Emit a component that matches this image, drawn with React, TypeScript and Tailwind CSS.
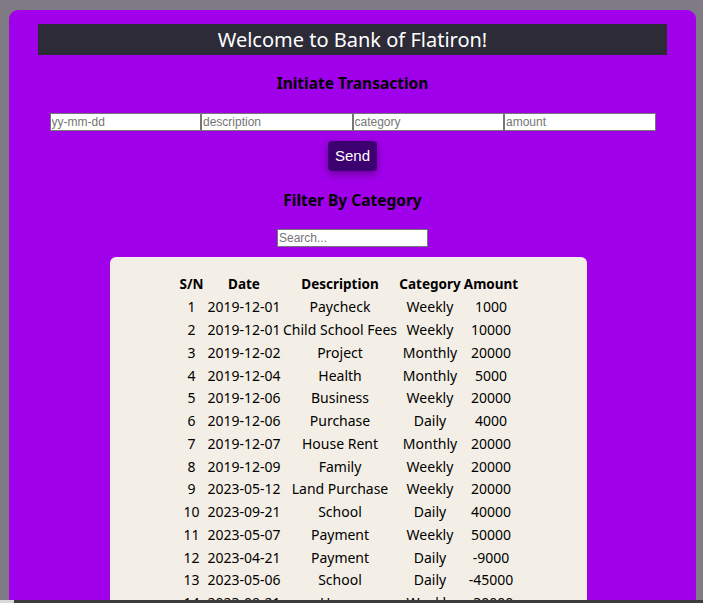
import React from "react";

const rows = [
  [1, "2019-12-01", "Paycheck", "Weekly", "1000"],
  [2, "2019-12-01", "Child School Fees", "Weekly", "10000"],
  [3, "2019-12-02", "Project", "Monthly", "20000"],
  [4, "2019-12-04", "Health", "Monthly", "5000"],
  [5, "2019-12-06", "Business", "Weekly", "20000"],
  [6, "2019-12-06", "Purchase", "Daily", "4000"],
  [7, "2019-12-07", "House Rent", "Monthly", "20000"],
  [8, "2019-12-09", "Family", "Weekly", "20000"],
  [9, "2023-05-12", "Land Purchase", "Weekly", "20000"],
  [10, "2023-09-21", "School", "Daily", "40000"],
  [11, "2023-05-07", "Payment", "Weekly", "50000"],
  [12, "2023-04-21", "Payment", "Daily", "-9000"],
  [13, "2023-05-06", "School", "Daily", "-45000"],
  [14, "2023-09-21", "Home", "Weekly", "-30000"],
  [15, "2023-09-21", "Home", "Weekly", "-30000"],
];

export default function App() {
  return (
    <div className="flex flex-col h-[603px] w-[703px] overflow-hidden bg-[#7f7a84] font-['Noto_Sans',sans-serif]">
      <div className="flex-1 overflow-hidden pt-[10px] pl-[9px] pr-[7px]">
        <div className="bg-[#a100ea] rounded-t-[9px] pt-[14px] min-h-full">
          {/* header */}
          <div className="mx-[29px] h-[31px] bg-[#2c2b37] flex items-center justify-center text-white text-[20px]">
            Welcome to Bank of Flatiron!
          </div>

          <h2 className="mt-[17px] text-center font-bold text-[15.5px] text-black">
            Initiate Transaction
          </h2>

          {/* form */}
          <form className="mt-[18px] flex justify-center">
            <input className="w-[151.5px] h-[18px] bg-white border border-[#767676] text-[12px] px-[1px] font-['Liberation_Sans',sans-serif] placeholder:text-[#757575]" placeholder="yy-mm-dd" />
            <input className="w-[151.5px] h-[18px] bg-white border border-[#767676] text-[12px] px-[1px] font-['Liberation_Sans',sans-serif] placeholder:text-[#757575]" placeholder="description" />
            <input className="w-[151.5px] h-[18px] bg-white border border-[#767676] text-[12px] px-[1px] font-['Liberation_Sans',sans-serif] placeholder:text-[#757575]" placeholder="category" />
            <input className="w-[151.5px] h-[18px] bg-white border border-[#767676] text-[12px] px-[1px] font-['Liberation_Sans',sans-serif] placeholder:text-[#757575]" placeholder="amount" />
          </form>
          <div className="mt-[10px] flex justify-center">
            <button className="w-[49px] h-[30px] rounded-[4px] bg-[#3d0070] text-white text-[15px] font-['Liberation_Sans',sans-serif] shadow-[0_3px_8px_rgba(0,0,0,0.35)]">
              Send
            </button>
          </div>

          <h2 className="mt-[18px] text-center font-bold text-[15.5px] text-black">
            Filter By Category
          </h2>
          <div className="mt-[16px] flex justify-center">
            <input className="w-[151px] h-[18px] bg-white border border-[#767676] text-[12px] px-[1px] font-['Liberation_Sans',sans-serif] placeholder:text-[#757575]" placeholder="Search..." />
          </div>

          {/* table card */}
          <div className="mt-[10px] ml-[101px] w-[477px] bg-[#f4efe6] rounded-t-[6px] pt-[16px] pb-4">
            <table className="mx-auto table-fixed border-collapse text-[14px] text-black">
              <colgroup>
                <col className="w-[28px]" />
                <col className="w-[77px]" />
                <col className="w-[115px]" />
                <col className="w-[65px]" />
                <col className="w-[57px]" />
              </colgroup>
              <thead>
                <tr className="h-[23px] text-[13.5px]">
                  <th className="p-0 font-bold text-center">S/N</th>
                  <th className="p-0 font-bold text-center">Date</th>
                  <th className="p-0 font-bold text-center">Description</th>
                  <th className="p-0 font-bold text-center whitespace-nowrap">Category</th>
                  <th className="p-0 font-bold text-center">Amount</th>
                </tr>
              </thead>
              <tbody>
                {rows.map((r) => (
                  <tr key={r[0]} className="h-[22.75px]">
                    <td className="p-0 text-center">{r[0]}</td>
                    <td className="p-0 text-center">{r[1]}</td>
                    <td className="p-0 text-center whitespace-nowrap">{r[2]}</td>
                    <td className="p-0 text-center">{r[3]}</td>
                    <td className="p-0 text-center">{r[4]}</td>
                  </tr>
                ))}
              </tbody>
            </table>
          </div>
        </div>
      </div>
      {/* bottom scrollbar strip */}
      <div className="h-[3px] flex shrink-0">
        <div className="w-[14px] bg-[#d8d8d8]" />
        <div className="flex-1 bg-[#3b3b3b]" />
      </div>
    </div>
  );
}
